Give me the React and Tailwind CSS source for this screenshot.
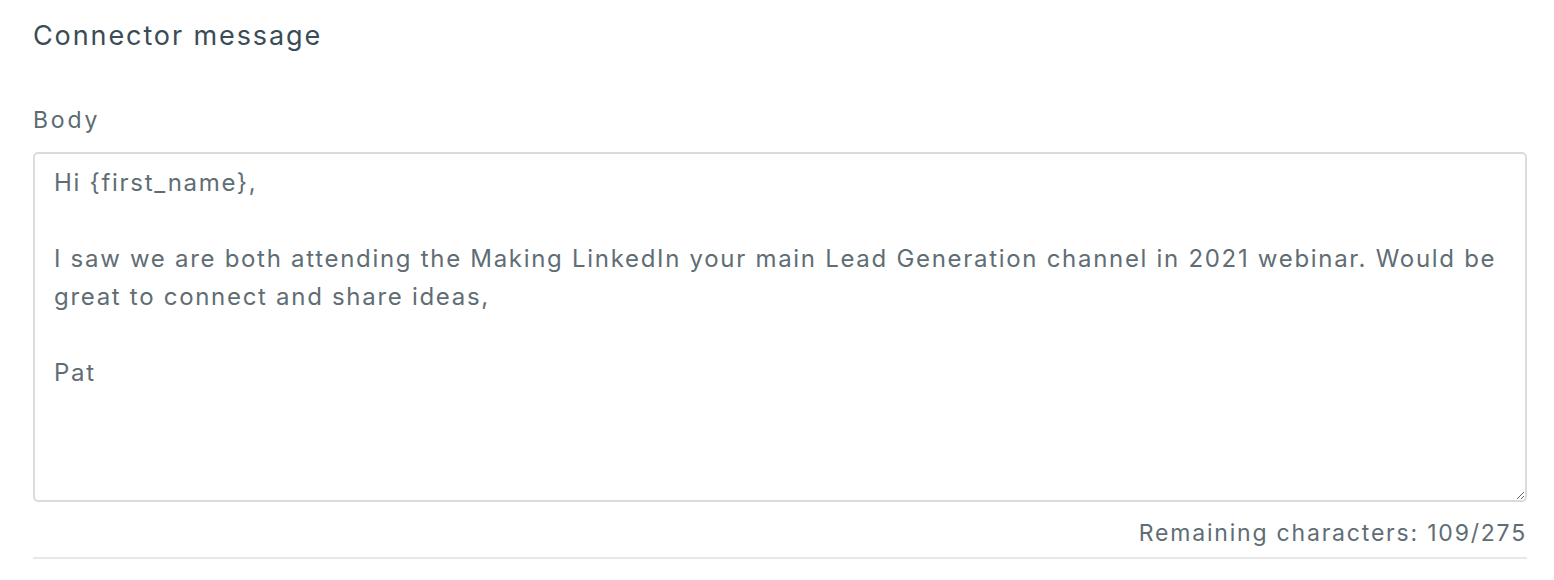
export default function App() {
  const body =
    "Hi {first_name},\n\nI saw we are both attending the Making LinkedIn your main Lead Generation channel in 2021 webinar. Would be great to connect and share ideas,\n\nPat";
  return (
    <div className="w-[1554px] h-[580px] bg-white pl-[33px] pr-[27px] pt-[16px] font-['Inter',sans-serif]">
      <h2 className="text-[27px] leading-[40px] tracking-[1.9px] text-[#3a4c56]">Connector message</h2>
      <label className="block mt-[47px] text-[23px] leading-[34px] tracking-[2.8px] text-[#5b6b73]">Body</label>
      <textarea
        defaultValue={body}
        className="mt-[15px] block w-full h-[350px] rounded-[5px] border-2 border-[#d8dcdf] bg-white px-[19px] py-[10px] text-[24px] leading-[38px] tracking-[1.7px] text-[#5f6d75] outline-none"
      />
      <div className="mt-[14px] text-right text-[23px] leading-[34px] tracking-[1.8px] text-[#5f6d75]">
        Remaining characters: 109/275
      </div>
      <div className="mt-[7px] border-t-2 border-[#e6e8ea]" />
    </div>
  );
}
